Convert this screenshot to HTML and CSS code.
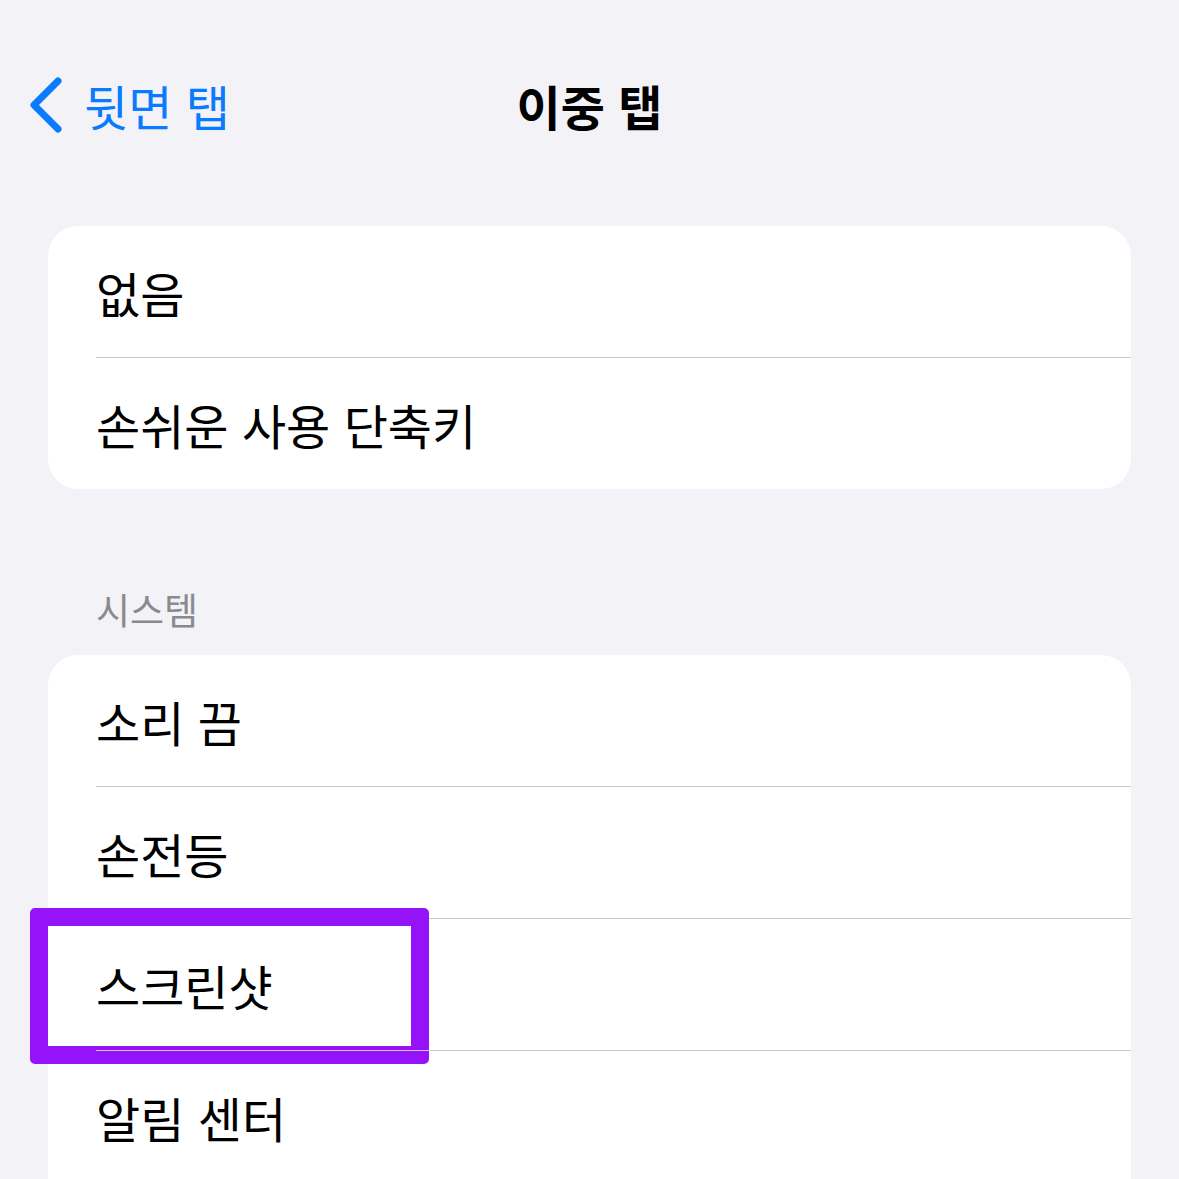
FILE: index.html
```html
<!DOCTYPE html>
<html lang="ko">

<head>
  <meta charset="UTF-8">
  <meta name="viewport" content="width=device-width, initial-scale=1.0">
  <title>이중 탭</title>
  <link rel="stylesheet" href="styles.css">
</head>

<body>
  <!-- Nav bar -->
  <header class="nav">
    <a class="back" href="#">
      <svg class="chevron" width="40" height="60" viewBox="0 0 40 60">
        <polyline points="33,6 9,30 33,54" fill="none" stroke="#0a7aff" stroke-width="7" stroke-linecap="round" stroke-linejoin="round" />
      </svg>
      <span>뒷면 탭</span>
    </a>
    <h1 class="title">이중 탭</h1>
    <div></div>
  </header>

  <main class="content">
    <div class="card">
      <div class="row"><div class="row-label">없음</div></div>
      <div class="row"><div class="row-label">손쉬운 사용 단축키</div></div>
    </div>

    <div class="section-title">시스템</div>
    <div class="card card-long">
      <div class="row"><div class="row-label">소리 끔</div></div>
      <div class="row"><div class="row-label">손전등</div></div>
      <div class="row highlighted"><div class="row-label">스크린샷</div></div>
      <div class="row"><div class="row-label">알림 센터</div></div>
    </div>
  </main>
</body>

</html>
```

FILE: styles.css
```css
body {
  font-family: "Noto Sans CJK KR", "Noto Sans", sans-serif;
  background: #f2f2f7;
  margin: 0;
  padding: 0;
  height: 1179px;
  overflow: hidden;
  color: #000;
}

.nav {
  height: 210px;
  display: grid;
  grid-template-columns: 1fr auto 1fr;
  align-items: center;
}

.back {
  display: flex;
  align-items: center;
  gap: 19px;
  padding-left: 25px;
  color: #0a7aff;
  font-size: 48px;
  text-decoration: none;
}

.chevron {
  flex-shrink: 0;
}

.title {
  margin: 0;
  font-size: 48px;
  font-weight: 600;
}

.content {
  padding: 16px 48px 0 48px;
}

.card {
  background: #ffffff;
  border-radius: 30px;
}

.card-long {
  padding-bottom: 60px;
}

.row {
  padding-left: 48px;
  position: relative;
}

.row-label {
  height: 131px;
  display: flex;
  align-items: center;
  font-size: 48px;
}

.row + .row .row-label {
  border-top: 1px solid #c8c8cc;
}

.section-title {
  margin: 97px 0 23px 48px;
  height: 46px;
  line-height: 46px;
  font-size: 37px;
  color: #8a8a8e;
}

/* purple annotation box */
.highlighted::after {
  content: "";
  position: absolute;
  left: -18px;
  top: -10px;
  width: 363px;
  height: 120px;
  border: 18px solid #9512f9;
  border-radius: 5px;
}
```
